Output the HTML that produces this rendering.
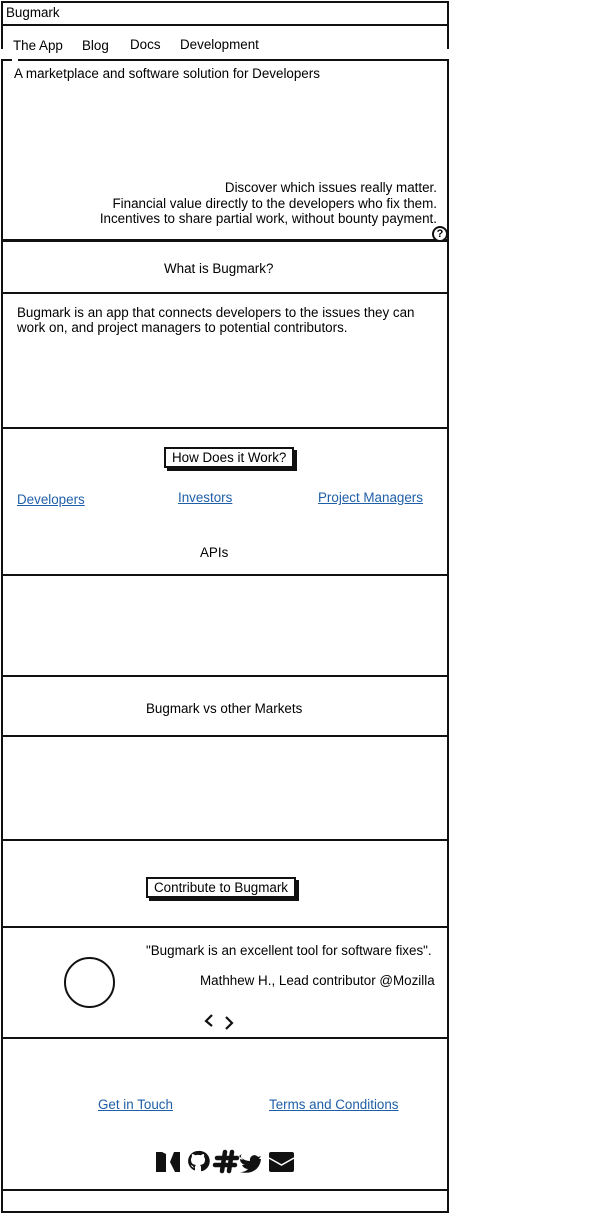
<!DOCTYPE html>
<html><head><meta charset="utf-8"><style>
body{margin:0;width:590px;height:1213px;background:#fff;font-family:"Liberation Sans",sans-serif;font-size:13.4px;color:#000;position:relative;overflow:hidden}
.b{position:absolute;left:1px;width:444px;border:2px solid #111;box-sizing:content-box}
.t{position:absolute;white-space:nowrap}
a{color:#1f5fa8;text-decoration:underline}
.btn{position:absolute;border:2px solid #111;background:#fff;box-shadow:3px 3px 0 #111;padding:1px 6px;white-space:nowrap}
</style></head><body>
<div class="b" style="top:1px;height:21px"></div>
<div class="t" style="left:6px;top:5px">Bugmark</div>
<div style="position:absolute;left:1px;top:25px;width:2px;height:24px;background:#111"></div>
<div style="position:absolute;left:447px;top:25px;width:2px;height:24px;background:#111"></div>
<div class="t" style="left:13px;top:38px">The App</div>
<div class="t" style="left:82px;top:38px">Blog</div>
<div class="t" style="left:130px;top:37px">Docs</div>
<div class="t" style="left:180px;top:37px">Development</div>
<div class="b" style="top:59px;height:178px"></div>
<div style="position:absolute;left:12px;top:57px;width:6px;height:4px;background:#fff"></div>
<div class="t" style="left:14px;top:66px">A marketplace and software solution for Developers</div>
<div class="t" style="right:153px;top:180px;text-align:right;line-height:15.5px">Discover which issues really matter.<br>Financial value directly to the developers who fix them.<br>Incentives to share partial work, without bounty payment.</div>
<div style="position:absolute;left:432px;top:226px;width:12px;height:12px;border:2px solid #111;border-radius:50%;background:#fff;font-size:11px;font-weight:bold;text-align:center;line-height:12px">?</div>
<div class="b" style="top:240px;height:50px"></div>
<div class="t" style="left:164px;top:261px">What is Bugmark?</div>
<div class="b" style="top:292px;height:133px"></div>
<div class="t" style="left:17px;top:305px;line-height:15px">Bugmark is an app that connects developers to the issues they can<br>work on, and project managers to potential contributors.</div>
<div class="b" style="top:427px;height:145px"></div>
<div class="btn" style="left:164px;top:447px">How Does it Work?</div>
<div class="t" style="left:17px;top:492px"><a>Developers</a></div>
<div class="t" style="left:178px;top:490px"><a>Investors</a></div>
<div class="t" style="left:318px;top:490px"><a>Project Managers</a></div>
<div class="t" style="left:200px;top:545px">APIs</div>
<div class="b" style="top:574px;height:99px"></div>
<div class="b" style="top:675px;height:58px"></div>
<div class="t" style="left:146px;top:701px">Bugmark vs other Markets</div>
<div class="b" style="top:735px;height:102px"></div>
<div class="b" style="top:839px;height:85px"></div>
<div class="btn" style="left:146px;top:877px">Contribute to Bugmark</div>
<div class="b" style="top:926px;height:109px"></div>
<div class="t" style="left:146px;top:943px">"Bugmark is an excellent tool for software fixes".</div>
<div class="t" style="left:200px;top:973px">Mathhew H., Lead contributor @Mozilla</div>
<div style="position:absolute;left:64px;top:957px;width:47px;height:47px;border:2px solid #111;border-radius:50%"></div>
<svg style="position:absolute;left:203px;top:1013px" width="32" height="18" viewBox="0 0 32 18"><path d="M9 2L3 8l6 5M23 4l6 6-6 6" stroke="#111" stroke-width="2.2" fill="none"/></svg>
<div class="b" style="top:1037px;height:150px"></div>
<div class="t" style="left:98px;top:1097px"><a>Get in Touch</a></div>
<div class="t" style="left:269px;top:1097px"><a>Terms and Conditions</a></div>
<svg style="position:absolute;left:155px;top:1149px" width="140" height="25" viewBox="0 0 140 25">
<path d="M1 3h6l4 2v18H1z M11 5l4 8 4-10h6v20h-5z" fill="#111"/>
<path d="M43 2a10 10 0 0 0-3 19.5v-3c-3 .5-3.5-1.5-4-2.5 1.2 0 2 1.5 2.5 2 1 .6 2 .3 1.5 0 0-1 .5-1.5 1-2-3-.5-5-1.500-5-5.5 0-1 .5-2 1-2.7-.2-.6-.3-1.8.2-2.8 1 0 2 .6 3 1.3a10 10 0 0 1 5.6 0c1-.7 2-1.3 3-1.3.5 1 .4 2.2.2 2.8.5.7 1 1.7 1 2.7 0 4-2 5-5 5.5.6.5 1 1.3 1 2.3v4A10 10 0 0 0 43 2z" fill="#111"/>
<g stroke="#111" stroke-width="4.5" stroke-linecap="round"><path d="M62 9h20M60 16h20M70 3l-3 19M77 3l-3 19"/></g>
<path d="M84 7c3 3 7 5 11 5c-1-5 5-8 8-4l3-1-2 3 2 0c-1 10-9 16-21 13 4 0 6-1 8-3-3 0-5-2-6-4h3c-3-1-5-3-5-6l3 1c-2-2-3-4-1-6z" fill="#111"/>
<rect x="114" y="3" width="25" height="20" rx="2" fill="#111"/><path d="M114 9l12.5 7 12.5-7" stroke="#fff" stroke-width="1.5" fill="none"/>
</svg>
<div class="b" style="top:1189px;height:20px"></div>
</body></html>
